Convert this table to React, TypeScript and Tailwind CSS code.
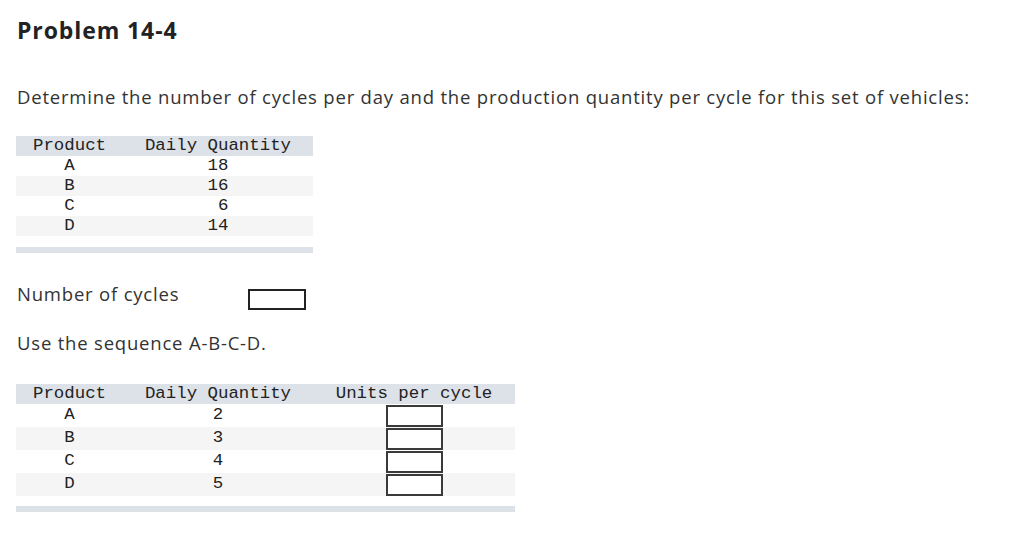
const first = [
  { p: "A", q: "18" },
  { p: "B", q: "16" },
  { p: "C", q: " 6" },
  { p: "D", q: "14" },
];

const second = [
  { p: "A", q: "2" },
  { p: "B", q: "3" },
  { p: "C", q: "4" },
  { p: "D", q: "5" },
];

const mono = { fontFamily: '"Liberation Mono", "Courier New", monospace' };

export default function App() {
  return (
    <div className="min-h-screen w-full bg-white text-[#333] pl-[17px] pt-[16px] font-['Open_Sans',sans-serif]">
      <h1 className="text-[23px] leading-[28px] font-bold tracking-[0.9px] text-[#222]">Problem 14-4</h1>

      <p className="mt-[41px] text-[18.5px] leading-[24px] tracking-[0.8px]">
        Determine the number of cycles per day and the production quantity per cycle for this set of vehicles:
      </p>

      {/* first table */}
      <div className="mt-[27px] -ml-px w-[297px] text-[17.4px] text-[#222]" style={mono}>
        <div className="flex h-[20px] items-center bg-[#dde1e8]">
          <div className="w-[107px] text-center">Product</div>
          <div className="w-[190px] text-center">Daily Quantity</div>
        </div>
        {first.map((r, i) => (
          <div key={r.p} className={`flex h-[20px] items-center ${i % 2 === 1 ? "bg-[#f5f5f5]" : "bg-white"}`}>
            <div className="w-[107px] text-center">{r.p}</div>
            <div className="w-[190px] text-center whitespace-pre">{r.q}</div>
          </div>
        ))}
        <div className="mt-[11px] h-[6px] bg-[#dde1e8]" />
      </div>

      <div className="mt-[29px] flex items-start">
        <span className="w-[231px] text-[18.5px] leading-[24px] tracking-[0.8px]">Number of cycles</span>
        <div className="mt-[7px] h-[21px] w-[58px] border-2 border-[#222] bg-white" />
      </div>

      <p className="mt-[21px] text-[18.5px] leading-[24px] tracking-[0.8px]">Use the sequence A-B-C-D.</p>

      {/* second table */}
      <div className="mt-[29px] -ml-px w-[499px] text-[17.4px] text-[#222]" style={mono}>
        <div className="flex h-[20px] items-center bg-[#dde1e8]">
          <div className="w-[107px] text-center">Product</div>
          <div className="w-[190px] text-center">Daily Quantity</div>
          <div className="w-[202px] text-center">Units per cycle</div>
        </div>
        {second.map((r, i) => (
          <div key={r.p} className={`flex h-[23px] items-center ${i % 2 === 1 ? "bg-[#f5f5f5]" : "bg-white"}`}>
            <div className="w-[107px] text-center">{r.p}</div>
            <div className="w-[190px] text-center">{r.q}</div>
            <div className="flex w-[202px] justify-center pl-px">
              <div className="h-[22px] w-[57px] border-2 border-[#3a3a3a] bg-white" />
            </div>
          </div>
        ))}
        <div className="mt-[10px] h-[6px] bg-[#dde1e8]" />
      </div>
    </div>
  );
}
